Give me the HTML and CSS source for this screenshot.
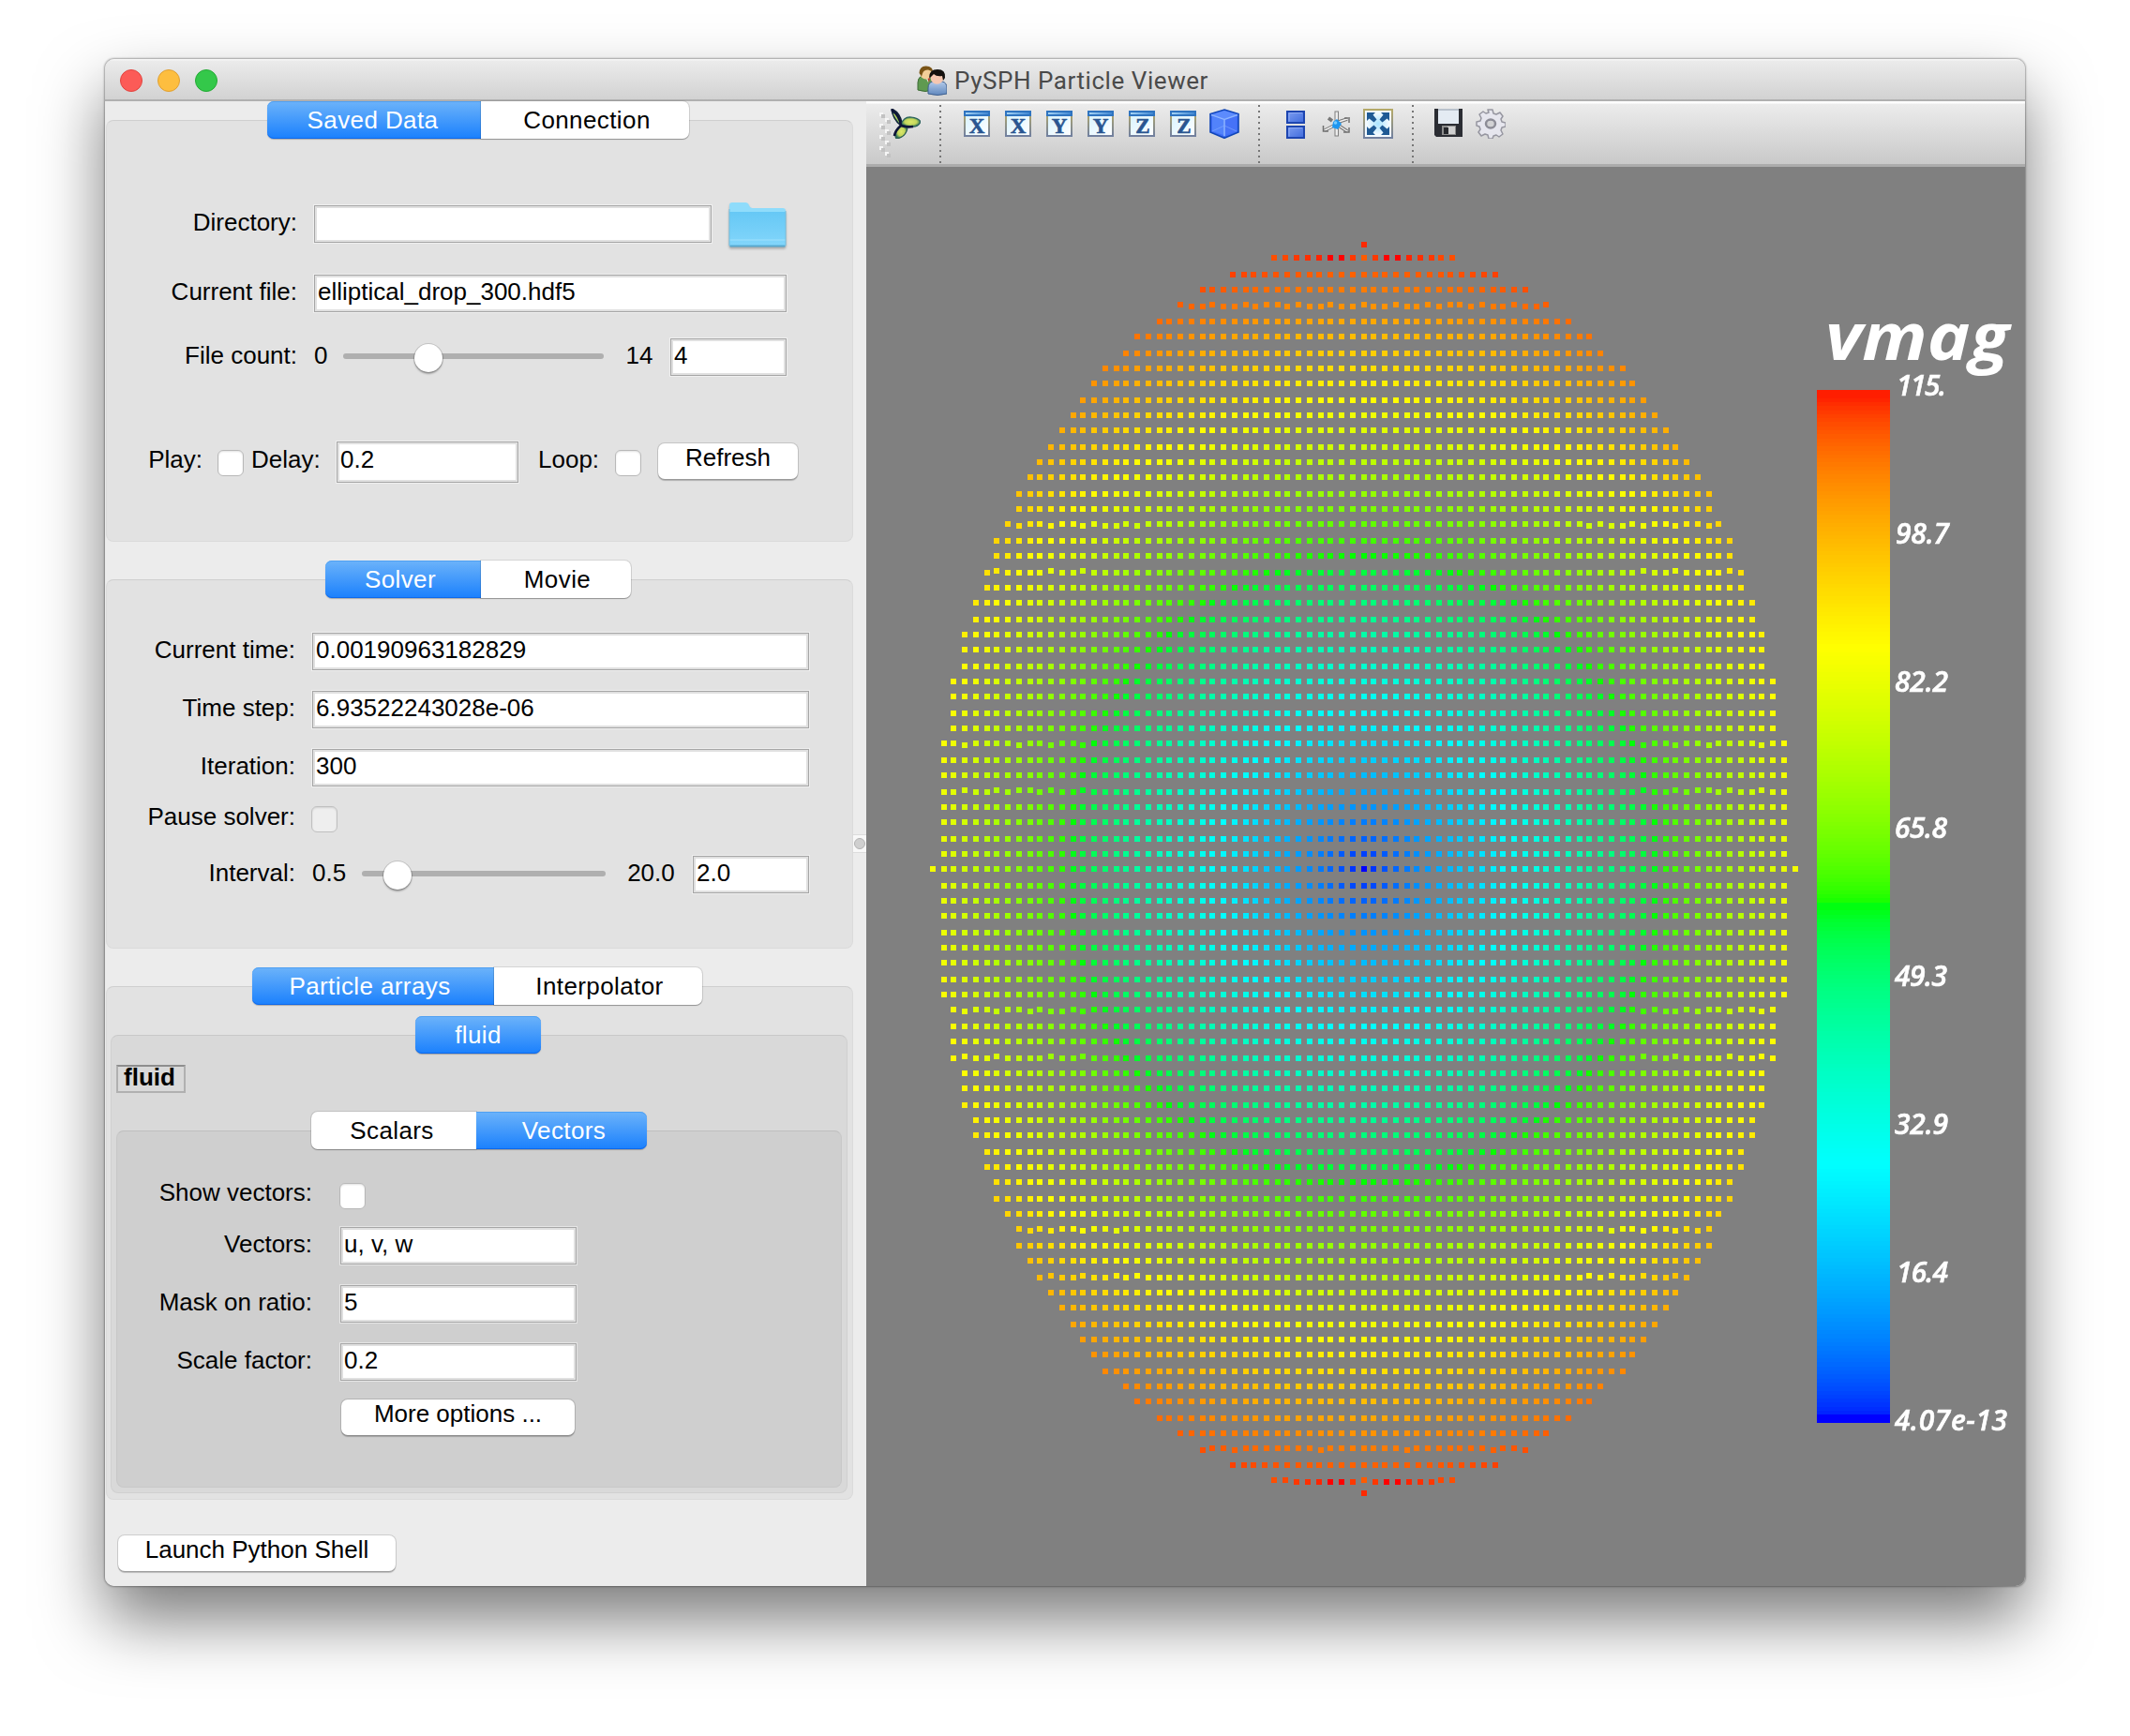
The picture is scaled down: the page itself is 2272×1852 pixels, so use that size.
FILE: index.html
```
<!DOCTYPE html>
<html lang="en">
<head>
<meta charset="utf-8">
<title>PySPH Particle Viewer</title>
<link rel="stylesheet" href="styles.css">
</head>
<body>
<svg class="defs" width="0" height="0">
  <defs>
    <linearGradient id="winFill" x1="0" y1="0" x2="1" y2="1"><stop offset="0" stop-color="#d6f2ff"/><stop offset="1" stop-color="#ffffff"/></linearGradient>
    <linearGradient id="winEdge" x1="0" y1="0" x2="0" y2="1"><stop offset="0" stop-color="#b5a968"/><stop offset="1" stop-color="#71809f"/></linearGradient>
    <linearGradient id="bar" x1="0" y1="0" x2="1" y2="0"><stop offset="0" stop-color="#a5d4f5"/><stop offset="1" stop-color="#3f86d2"/></linearGradient>
    <linearGradient id="blueBox" x1="0" y1="0" x2="1" y2="1"><stop offset="0" stop-color="#7d9df0"/><stop offset="1" stop-color="#3f6bdc"/></linearGradient>
    <linearGradient id="folder" x1="0" y1="0" x2="0" y2="1"><stop offset="0" stop-color="#66c8f5"/><stop offset="1" stop-color="#83d6fb"/></linearGradient>
    <radialGradient id="glow"><stop offset="0" stop-color="#a9e4ff"/><stop offset="1" stop-color="#a9e4ff" stop-opacity="0"/></radialGradient>
    <radialGradient id="leaf"><stop offset="0" stop-color="#dbe86a"/><stop offset=".6" stop-color="#c3d65c"/><stop offset="1" stop-color="#2f7358"/></radialGradient>
    <linearGradient id="person" x1="0" y1="0" x2="0" y2="1"><stop offset="0" stop-color="#b4cbea"/><stop offset="1" stop-color="#5f87bd"/></linearGradient>
    <symbol id="frame" viewBox="0 0 32 32">
      <rect x="3" y="3" width="26" height="26" fill="url(#winFill)" stroke="url(#winEdge)" stroke-width="2"/>
      <rect x="2" y="2" width="28" height="6" fill="#2f74c0"/>
      <rect x="4" y="4" width="24" height="2" fill="url(#bar)"/>
    </symbol>
  </defs>
</svg>

<div class="window">
  <header class="titlebar">
    <div class="lights"><i class="light red"></i><i class="light yellow"></i><i class="light green"></i></div>
    <div class="title">
      <svg class="title-icon" viewBox="0 0 32 32">
        <path d="M1 25V18q0-5 4-7h8q4 2 4 7v8q-8 3-16 0z" fill="#5f9a50" stroke="#3d6b36"/>
        <path d="M9 12l3 6 2-6z" fill="#dff0dc"/><path d="M11 13l2 5 1-5z" fill="#c0392b"/>
        <circle cx="9.500" cy="8.500" r="6" fill="#f3cf98"/>
        <path d="M2.500 8Q3 0 10 .5q7 .5 7 6l-5-2q-5 0-6 4l-1 3z" fill="#7a5416"/>
        <path d="M12 30v-6q0-6 5-7h10q5 1 5 7v6q-10 3-20 0z" fill="url(#person)" stroke="#3f608f"/>
        <circle cx="21.500" cy="13" r="6.800" fill="#f6c7b0"/>
        <path d="M13 13q0-9 9-9 9 0 8 9l-2 3-1-5q-6 1-9-2l-3 3z" fill="#14110f"/>
      </svg>
      <span class="title-text">PySPH Particle Viewer</span>
    </div>
  </header>

  <div class="body">
    <aside class="side">
      <section class="group g-data">
        <div class="tabs"><span class="tab on t-saved">Saved Data</span><span class="tab t-conn">Connection</span></div>
        <div class="row r-dir"><label>Directory:</label><span class="field f-dir"></span>
          <svg class="folder" viewBox="0 0 62 50">
            <path d="M1 47V4q0-3 3-3h14q3 0 4 3 1 3 4 3h32q3 0 3 3v37z" fill="#8fdcfb"/>
            <path d="M1 11h60v35q0 2-2 2H3q-2 0-2-2z" fill="url(#folder)"/>
            <path d="M1 41h60" stroke="#9fe0fc"/>
            <path d="M1.500 47.500h59" stroke="#58a9cf" stroke-width="2"/>
            <path d="M1 8v39M61 10v37" stroke="#74bfdf"/>
          </svg>
        </div>
        <div class="row r-file"><label>Current file:</label><span class="field f-file">elliptical_drop_300.hdf5</span></div>
        <div class="row r-count"><label>File count:</label><span class="min">0</span><span class="slider s-count"><i class="knob"></i></span><span class="max m-count">14</span><span class="field f-num">4</span></div>
        <div class="row r-play"><label>Play:</label><i class="check c-play"></i><span class="delay">Delay:</span><span class="field f-delay">0.2</span><span class="loop">Loop:</span><i class="check c-loop"></i><button class="btn b-refresh">Refresh</button></div>
      </section>

      <section class="group g-solver">
        <div class="tabs"><span class="tab on t-solver">Solver</span><span class="tab t-movie">Movie</span></div>
        <div class="row r-time"><label>Current time:</label><span class="field f-wide">0.00190963182829</span></div>
        <div class="row r-step"><label>Time step:</label><span class="field f-wide">6.93522243028e-06</span></div>
        <div class="row r-step"><label>Iteration:</label><span class="field f-wide">300</span></div>
        <div class="row r-pause"><label>Pause solver:</label><i class="check disabled"></i></div>
        <div class="row r-interval"><label>Interval:</label><span class="min">0.5</span><span class="slider s-interval"><i class="knob"></i></span><span class="max m-interval">20.0</span><span class="field f-num">2.0</span></div>
      </section>

      <section class="group g-arrays">
        <div class="tabs"><span class="tab on t-arrays">Particle arrays</span><span class="tab t-interp">Interpolator</span></div>
        <section class="group g-fluid">
          <div class="tabs"><span class="tab on t-fluid">fluid</span></div>
          <div class="badge">fluid</div>
          <section class="group g-vectors">
            <div class="tabs"><span class="tab t-scalars">Scalars</span><span class="tab on t-vectors">Vectors</span></div>
            <div class="row r-show"><label>Show vectors:</label><i class="check"></i></div>
            <div class="row r-vec"><label>Vectors:</label><span class="field f-vec">u, v, w</span></div>
            <div class="row r-step"><label>Mask on ratio:</label><span class="field f-vec">5</span></div>
            <div class="row r-step"><label>Scale factor:</label><span class="field f-vec">0.2</span></div>
            <button class="btn b-more">More options ...</button>
          </section>
        </section>
      </section>
      <button class="btn b-shell">Launch Python Shell</button>
      <div class="splitter"><i></i></div>
    </aside>

    <main class="main">
      <nav class="toolbar">
        <svg class="grip" viewBox="0 0 12 48" shape-rendering="crispEdges">
          <g fill="#f6f6f6"><path d="M0 0h4v4H0zM6 6h4v4H6zM0 12h4v4H0zM6 18h4v4H6zM0 24h4v4H0zM6 30h4v4H6zM0 36h4v4H0zM6 42h4v4H6z"/></g>
          <g fill="#c2c2c2"><path d="M2 2h4v4H2zM8 8h4v4H8zM2 14h4v4H2zM8 20h4v4H8zM2 26h4v4H2zM8 32h4v4H8zM2 38h4v4H2zM8 44h4v4H8z"/></g>
        </svg>
        <svg class="ico" viewBox="0 0 32 32">
          <path d="M11 18Q2 11 1 0q9 4 11 15z" fill="#3f8a5c" stroke="#14243a" stroke-width="1.500"/>
          <path d="M4 5q3 5 6 9" stroke="#bcd360" stroke-width="2.500" fill="none"/>
          <path d="M11 17Q14 8 22 9q8 1 10 5-3 6-10 5-6 0-11-2z" fill="url(#leaf)" stroke="#28605a" stroke-width="1.200"/>
          <path d="M12 17q8 1 5 7-3 7-11 8-4-8 6-15z" fill="url(#leaf)" stroke="#2b5c50" stroke-width="1.200"/>
          <path d="M1 1q9 7 10 17-6 5-7 11M11 18q6 2 13 1" fill="none" stroke="#0d1438" stroke-width="2.600"/>
        </svg>
        <i class="sep"></i>
        <svg class="ico" viewBox="0 0 32 32"><use href="#frame"/><text class="axis" x="16" y="26" textLength="17">X</text></svg>
        <svg class="ico" viewBox="0 0 32 32"><use href="#frame"/><text class="axis" x="16" y="26" textLength="17">X</text></svg>
        <svg class="ico" viewBox="0 0 32 32"><use href="#frame"/><text class="axis" x="16" y="26" textLength="17">Y</text></svg>
        <svg class="ico" viewBox="0 0 32 32"><use href="#frame"/><text class="axis" x="16" y="26" textLength="17">Y</text></svg>
        <svg class="ico" viewBox="0 0 32 32"><use href="#frame"/><text class="axis" x="17" y="26" textLength="15">Z</text></svg>
        <svg class="ico" viewBox="0 0 32 32"><use href="#frame"/><text class="axis" x="17" y="26" textLength="15">Z</text></svg>
        <svg class="ico" viewBox="0 0 32 32">
          <path d="M16 1L31 5.500V25L16 31.300 1 25V5.500z" fill="#3d6cf5" stroke="#1146b8" stroke-width="1.600"/>
          <path d="M3 6l13-4 13 4-13 5z" fill="#5c8bfd"/>
          <path d="M3 8l12 4v16L3 24z" fill="#5283fb"/><path d="M29 8l-12 4v16l12-4z" fill="#4672f7"/>
          <path d="M2 6.500l14 5 14-5M16 11.500V29" fill="none" stroke="#8db4ff" stroke-width="1.600"/>
          <path d="M3 24l13-6 13 6" fill="none" stroke="#86abff" opacity=".6"/>
        </svg>
        <i class="sep"></i>
        <svg class="ico" viewBox="0 0 32 32">
          <rect x="7" y="3" width="18" height="12" fill="url(#blueBox)" stroke="#1d45b0" stroke-width="2"/>
          <rect x="7" y="19" width="18" height="12" fill="url(#blueBox)" stroke="#1d45b0" stroke-width="2"/>
          <path d="M9 13.500V4.500h14M9 29.500v-9h14" fill="none" stroke="#8eaaf4"/>
        </svg>
        <svg class="ico" viewBox="0 0 32 32">
          <rect x="14" y="3" width="3.500" height="26" fill="#ececec" stroke="#7e7e7e"/>
          <path d="M3 23l10-5M18 18l9 6M18 14l9-3M11 13L7 10" stroke="#777" stroke-width="3.600" fill="none"/>
          <path d="M3 23l10-5M18 18l9 6M18 14l9-3" stroke="#f0f0f0" stroke-width="1.400" fill="none"/>
          <path d="M1.500 18v6H7M29 20v5h-6M24 10h6M29 11v4" stroke="#6f6f6f" stroke-width="1.500" fill="none"/>
          <path d="M16 11l5 5-4 6-6-2 1-6z" fill="#1e96ef"/><circle cx="14.500" cy="15" r="1.800" fill="#77cbff"/>
        </svg>
        <svg class="ico" viewBox="0 0 32 32">
          <rect x="1" y="1" width="30" height="30" fill="#f3faff" stroke="url(#winEdge)" stroke-width="2"/>
          <circle cx="16" cy="16" r="12" fill="url(#glow)"/>
          <g fill="#1f5a94"><path d="M4 4h9l-2.500 2.500 4 5-3 3-5-4L4 13z"/><path d="M28 4h-9l2.500 2.500-4 5 3 3 5-4L28 13z"/><path d="M4 28h9l-2.500-2.500 4-5-3-3-5 4L4 19z"/><path d="M28 28h-9l2.500-2.500-4-5 3-3 5 4L28 19z"/></g>
        </svg>
        <i class="sep"></i>
        <svg class="ico" viewBox="0 0 32 32">
          <path d="M0 0h30v30H2l-2-2z" fill="#2b2d33"/>
          <rect x="4" y="0" width="22" height="16" fill="#e4ebf3"/><path d="M4 1h22" stroke="#b9c2cd" stroke-width="2"/>
          <rect x="8" y="18" width="15" height="10" fill="#8d8d8d"/><path d="M14 19h8v8h-8z" fill="#d0d0d0"/><rect x="10" y="20" width="5" height="7" fill="#26282c"/>
        </svg>
        <svg class="ico" viewBox="0 0 32 32">
          <path d="M13 1h5l1 4 3 1 4-2 3 4-2 3 1 3 4 1v4l-4 1-1 3 2 4-4 3-3-2-3 1-1 3h-4l-1-4-3-1-4 2-3-4 2-3-1-3-3-1v-4l4-1 1-3-2-4 4-3 3 2 3-1z" fill="#e6e6ee" stroke="#9696a0" stroke-width="1.500" stroke-linejoin="round"/>
          <ellipse cx="16" cy="16" rx="5" ry="4.500" fill="#d2d2d4" stroke="#8c8c96" stroke-width="2.500"/>
        </svg>
      </nav>
      <div class="scene">
        <canvas id="particles" class="particles" width="1237" height="1514"></canvas>
        <svg class="legend" viewBox="1924 178 237 1514" width="237" height="1514">
          <g id="bands" shape-rendering="crispEdges"></g>
          <text class="leg-title" x="1947" y="384" textLength="196" lengthAdjust="spacingAndGlyphs">vmag</text>
          <text class="leg" x="2023" y="422" textLength="53">115.</text>
          <text class="leg" x="2022" y="580" textLength="57">98.7</text>
          <text class="leg" x="2021" y="738" textLength="57">82.2</text>
          <text class="leg" x="2021" y="894" textLength="56">65.8</text>
          <text class="leg" x="2021" y="1052" textLength="56">49.3</text>
          <text class="leg" x="2021" y="1210" textLength="57">32.9</text>
          <text class="leg" x="2023" y="1368" textLength="55">16.4</text>
          <text class="leg" x="2021" y="1526" textLength="120">4.07e-13</text>
        </svg>
      </div>
    </main>
  </div>
</div>
<script src="plot.js"></script>
</body>
</html>
```
FILE: styles.css
```
* { box-sizing: border-box; }
body { margin: 0; width: 2272px; height: 1852px; overflow: hidden; background: #fff; font: 26px/36px "Liberation Sans", Arial, sans-serif; color: #000; }
.defs { display: block; height: 0; }
.window { margin: 63px 0 0 112px; width: 2048px; height: 1629px; border-radius: 10px; display: flex; flex-direction: column; background: #ececec; box-shadow: 0 0 2px 1px rgba(0,0,0,.32), 0 36px 70px 0 rgba(0,0,0,.52); overflow: hidden; }
.titlebar { height: 45px; flex: none; display: grid; grid-template-columns: 866px 1fr; align-items: center; background: linear-gradient(#f6f6f6 0 1px, #ebebeb 2px, #d2d2d2 43px, #b0b0b0 43px); }
.lights { display: flex; gap: 16px; padding-left: 16px; }
.light { width: 24px; height: 24px; border-radius: 50%; border: 1px solid; }
.red { background: #fc5b57; border-color: #e2443f; }
.yellow { background: #fdbe3f; border-color: #e0a033; }
.green { background: #34c84a; border-color: #24ab35; }
.title { display: flex; align-items: center; gap: 8px; padding-top: 1px; color: #4a4a4a; }
.title-icon { width: 32px; height: 32px; }
.title-text { font: 26px/36px Roboto, sans-serif; letter-spacing: .55px; }
.body { flex: 1; display: grid; grid-template-columns: 812px 1236px; min-height: 0; }

.side { position: relative; padding-top: 20px; background: #ececec; }
.group { border: 1px solid #d6d6d6; border-color: #cfcfcf #dadada #dadada; border-radius: 8px; background: #e2e2e2; width: 797px; margin-left: 1px; }
.g-data { height: 450px; }
.g-solver { height: 394px; margin-top: 40px; }
.g-arrays { height: 548px; margin-top: 40px; }
.g-fluid { height: 489px; width: 786px; margin: 32px 0 0 4px; background: #d9d9d9; border-color: #c8c8c8 #d0d0d0 #d0d0d0; }
.g-vectors { height: 381px; width: 774px; margin: 40px 0 0 5px; background: #cfcfcf; border-color: #bfbfbf #c8c8c8 #c8c8c8; }
.tabs { display: flex; justify-content: center; height: 40px; margin-top: -21px; padding-right: 4px; }
.tab { height: 40px; line-height: 41px; text-align: center; letter-spacing: .4px; background: #fff; border-radius: 0 7px 7px 0; box-shadow: 0 1px 1px rgba(0,0,0,.28), 0 0 0 1px rgba(0,0,0,.1); }
.tab:first-child { border-radius: 7px 0 0 7px; }
.tab.on { color: #fff; background: linear-gradient(#6cb3fa, #1a80fd); box-shadow: inset 0 1px #4fa0f2, inset 0 -1px #0d69ec, 0 1px 1px rgba(0,0,0,.25); }
.t-saved { width: 228px; padding-right: 2px; } .t-conn { width: 222px; padding-left: 5px; }
.t-solver { width: 166px; padding-right: 5px; } .t-movie { width: 160px; padding-left: 4px; }
.t-arrays { width: 258px; padding-right: 6px; } .t-interp { width: 222px; padding-left: 4px; }
.g-arrays > .tabs { padding-right: 6px; }
.g-fluid > .tabs { padding-right: 2px; }
.g-vectors > .tabs { padding-right: 1px; }
.tab.t-fluid { width: 134px; border-radius: 7px; }
.t-scalars { width: 176px; padding-right: 3px; } .tab.on.t-vectors { width: 182px; padding-left: 6px; border-radius: 0 7px 7px 0; }

.row { display: flex; align-items: flex-start; height: 40px; white-space: nowrap; }
.row label { width: 203px; text-align: right; margin-right: 18px; }
.g-solver label { width: 201px; }
.field { height: 40px; padding-left: 3px; background: #fff; border: 1px solid #a6a6a6; box-shadow: inset 0 0 0 2px #e0e0e0, 0 0 0 1px rgba(255,255,255,.45); line-height: 34px; }
.r-dir { margin-top: 71px; } .f-dir { width: 424px; } .folder { width: 62px; height: 50px; margin: -4px 0 0 18px; filter: drop-shadow(0 2px 1px rgba(0,0,0,.25)); }
.r-file { margin-top: 34px; } .f-file { width: 504px; }
.r-count { margin-top: 28px; } .f-num { width: 124px; margin-left: auto; }
.r-count { width: 725px; }
.slider { height: 6px; border-radius: 3px; background: #afafaf; position: relative; }
.knob { position: absolute; top: -10px; width: 30px; height: 30px; border-radius: 50%; background: #fff; box-shadow: 0 0 0 1px rgba(0,0,0,.14), 0 2px 2px rgba(0,0,0,.3); }
.s-count { width: 278px; margin: 16px 0 0 17px; } .s-count .knob { left: 76px; }
.s-interval { width: 260px; margin: 16px 0 0 17px; } .s-interval .knob { left: 23px; }
.m-count { margin-left: 23px; } .m-interval { margin-left: 23px; }
.r-play { margin-top: 70px; height: 44px; line-height: 38px; }
.r-play label { width: 102px; margin-right: 16px; }
.check { display: block; width: 28px; height: 28px; border-radius: 6px; background: #fff; border: 1px solid #b8b8b8; box-shadow: inset 0 1px 2px rgba(0,0,0,.12); }
.check.disabled { background: #eee; border-color: #c0c0c0; }
.c-play, .c-loop { margin-top: 9px; }
.delay { margin-left: 8px; width: 73px; } .f-delay { width: 194px; height: 44px; margin-left: 18px; line-height: 36px; }
.loop { margin-left: 21px; width: 65px; } .c-loop { margin-left: 17px; }
.btn { display: block; height: 40px; border: 0; border-radius: 7px; background: #fff; font: inherit; line-height: 30px; padding: 0 0 8px; text-align: center; box-shadow: 0 0 0 1px rgba(0,0,0,.13), 0 2px 1px rgba(0,0,0,.22); }
.b-refresh { width: 149px; height: 38px; margin: 2px 0 0 18px; }
.r-time { margin-top: 37px; } .r-step { margin-top: 22px; } .f-wide { width: 530px; }
.r-pause { margin-top: 14px; height: 36px; } .r-pause .check { margin-top: 7px; margin-left: -1px; }
.r-interval { margin-top: 24px; width: 749px; }
.badge { width: 74px; height: 30px; margin: 12px 0 0 5px; border: 2px solid #b0b0b0; border-top-color: #8e8e8e; font-weight: bold; line-height: 22px; padding-left: 6px; }
.g-vectors .row label { width: 208px; margin-right: 30px; }
.r-show { margin-top: 36px; height: 28px; } .r-show label { line-height: 21px; } .g-vectors .r-show label { margin-right: 29px; }
.r-vec { margin-top: 19px; } .f-vec { width: 252px; }
.b-more { width: 249px; height: 38px; margin: 20px 0 0 239px; }
.b-shell { width: 296px; height: 38px; margin: 38px 0 0 14px; }
.splitter { position: absolute; right: 0; top: 782px; width: 14px; height: 20px; background: #f8f8f8; border: solid #dcdcdc; border-width: 1px 0; display: flex; align-items: center; justify-content: center; }
.splitter i { width: 12px; height: 12px; border-radius: 50%; background: #cfcfcf; border: 1px solid #b2b2b2; }

.main { display: flex; flex-direction: column; min-width: 0; }
.toolbar { height: 70px; flex: none; display: flex; align-items: flex-start; gap: 12px; padding: 8px 0 0 14px; background: linear-gradient(#fff 0 2px, #ececec 3px, #c9c9c9 67px, #acacac 67px); }
.grip { width: 12px; height: 48px; margin: 4px -12px 0 0; }
.ico { width: 32px; height: 32px; flex: none; }
.sep { width: 2px; height: 62px; margin: -4px 10px 0 8px; background: repeating-linear-gradient(#767676 0 2px, transparent 2px 6px); }
.axis { font: bold 23px "Liberation Serif", serif; fill: #2a5590; stroke: #2a5590; stroke-width: .6; text-anchor: middle; }
.scene { position: relative; flex: 1; background: #808080; overflow: hidden; }
.particles { display: block; }
.legend { position: absolute; left: 1000px; top: 0; }
.leg, .leg-title { font: italic 600 30px "Open Sans", sans-serif; fill: #fff; stroke: #fff; stroke-width: .6; }
.leg-title { font-weight: 700; font-size: 70px; stroke: none; }
```
FILE: plot.js
```
// Blue-to-red hue ramp, t in 0..1.
const channel = v => Math.round(255 * Math.pow(Math.max(0, Math.min(1, v)), 0.6));
function ramp(t) {
  const h = 4 * Math.max(0, Math.min(1, t));
  if (h < 1) return `rgb(0,${channel(h)},255)`;
  if (h < 2) return `rgb(0,255,${channel(2 - h)})`;
  if (h < 3) return `rgb(${channel(h - 2)},255,0)`;
  return `rgb(255,${channel(4 - h)},0)`;
}

// Elliptical drop: unit disc of 81 x 81 particles stretched along y.
const ctx = document.getElementById('particles').getContext('2d');
const CX = 1455 - 924, CY = 927 - 178;
const poleSpeed = [0.955, 0.98, 1, 1, 0.99, 0.985, 0.98, 0.97, 0.965, 0.965];
for (let j = -40; j <= 40; j++) {
  for (let i = -40; i <= 40; i++) {
    if (i * i + j * j > 1600) continue;
    const aj = Math.abs(j), ai = Math.abs(i);
    const sx = aj === 39 ? 5.97 : aj === 38 ? 5.83 : 5.745;
    let dy = 8.355 * j;
    if (aj === 40) dy = 333 * Math.sign(j);
    else if (aj === 39 && ai && ai < 7) dy += 0.5 * Math.sign(j);
    else if (aj > 34 || (ai > 20 && ai * ai + aj * aj > 700)) dy += 0.07 * Math.sin(ai * 2.3 + aj * 0.9);
    const x = CX + 2 * Math.round(sx * i - 0.3);
    const y = CY - 2 * Math.round(dy - 0.3);
    let t = Math.hypot(i * 0.0183, j * 0.025);
    if (aj === 39) t = poleSpeed[ai];
    if (aj === 40) t = 0.988;
    ctx.fillStyle = ramp(t);
    ctx.fillRect(x - 3, y - 3, 6, 6);
  }
}

// Colour bar bands; the ends and the middle hold one hue for two steps.
const bands = document.getElementById('bands');
const N = 256, TOP = 416, H = 1102;
for (let k = 0; k < N; k++) {
  const r = document.createElementNS('http://www.w3.org/2000/svg', 'rect');
  const y0 = Math.round(TOP + H * k / N), y1 = Math.round(TOP + H * (k + 1) / N);
  let t = Math.min(0.993, 1 - (k + 0.5) / N);
  if (k > 253) t = 0;
  if (k === 127 || k === 128) t = 0.4975;
  r.setAttribute('x', 1938);
  r.setAttribute('y', y0);
  r.setAttribute('width', 78);
  r.setAttribute('height', y1 - y0);
  r.setAttribute('fill', ramp(t));
  bands.appendChild(r);
}
```
